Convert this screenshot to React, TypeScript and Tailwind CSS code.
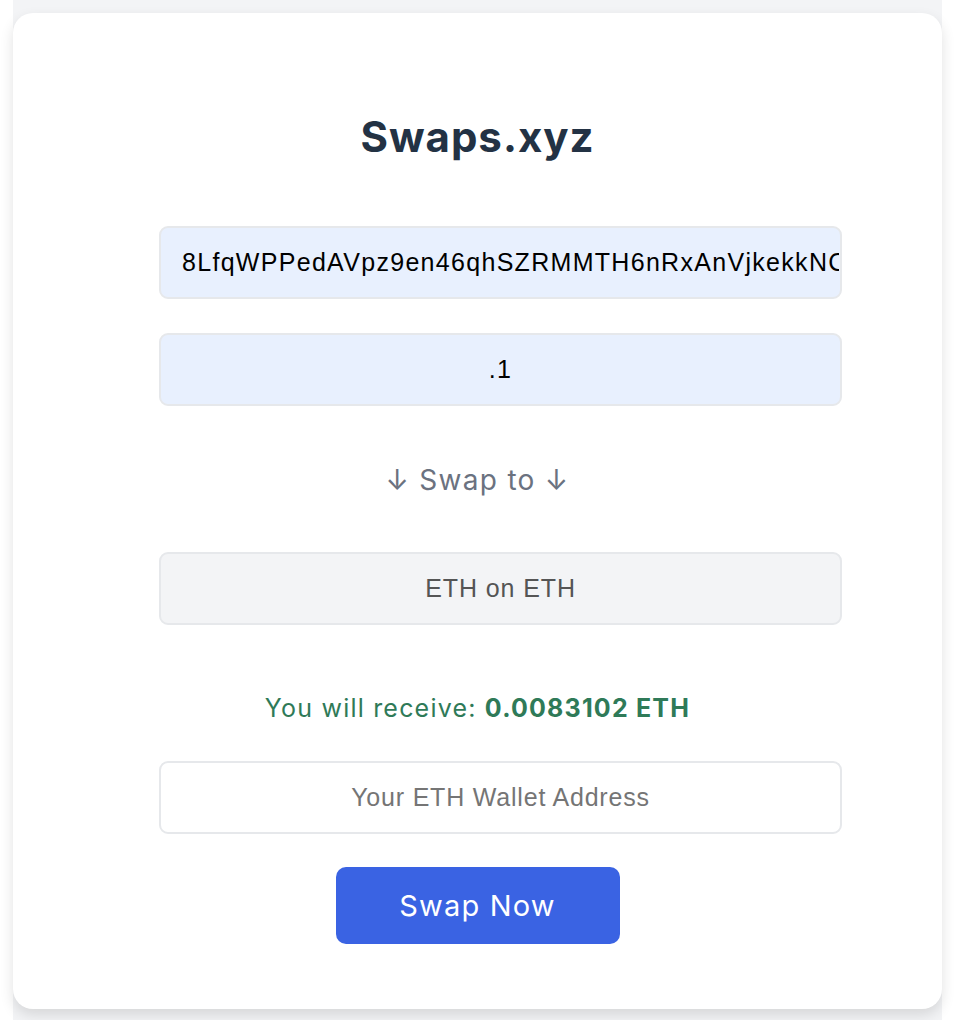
import { useState } from "react";

const App = () => {
  const [address, setAddress] = useState("");

  return (
    <div className="min-h-screen bg-white">
      <div className="ml-[13px] w-[929px] min-h-screen bg-[#f3f4f6] pt-[13px]">
        <div className="flex flex-col items-center rounded-[20px] bg-white pt-[112px] pb-[65px] shadow-[0_6px_14px_rgba(0,0,0,0.12)]">
          <h1 className="font-['Inter',sans-serif] text-[42px] leading-[50px] font-bold tracking-[1px] text-[#233244] -mt-[13px]">
            Swaps.xyz
          </h1>

          <div className="mt-[64px] flex w-[637px] flex-col">
            <input
              readOnly
              defaultValue="8LfqWPPedAVpz9en46qhSZRMMTH6nRxAnVjkekkNCDH4"
              className="h-[73px] w-[683px] max-w-none rounded-[9px] border-2 border-[#e6e8eb] bg-[#e8f0fe] pl-[21px] pr-[1px] text-center font-['Liberation_Sans',Arial,sans-serif] text-[25px] tracking-[1.3px] text-black outline-none"
            />
            <input
              readOnly
              defaultValue=".1"
              className="mt-[34px] h-[73px] w-[683px] max-w-none rounded-[9px] border-2 border-[#e6e8eb] bg-[#e8f0fe] px-[21px] text-center font-['Liberation_Sans',Arial,sans-serif] text-[25px] tracking-[1.3px] text-black outline-none"
            />

            <p className="mt-[57px] text-center font-['Inter',sans-serif] text-[28px] leading-[34px] tracking-[1.3px] text-[#6b7280]">
              ↓ Swap to ↓
            </p>

            <div className="mt-[55px] flex h-[73px] w-[683px] items-center justify-center rounded-[9px] border-2 border-[#e6e8eb] bg-[#f3f4f6] font-['Liberation_Sans',Arial,sans-serif] text-[25px] tracking-[0.9px] text-[#555555]">
              ETH on ETH
            </div>

            <p className="mt-[68px] text-center font-['Inter',sans-serif] text-[25px] leading-[30px] tracking-[1.2px] text-[#2f7a58]">
              You will receive: <span className="font-bold">0.0083102 ETH</span>
            </p>

            <input
              value={address}
              onChange={(e) => setAddress(e.target.value)}
              placeholder="Your ETH Wallet Address"
              className="mt-[38px] h-[73px] w-[683px] max-w-none rounded-[9px] border-2 border-[#e6e8eb] bg-white px-[21px] text-center font-['Liberation_Sans',Arial,sans-serif] text-[25px] tracking-[0.8px] text-black outline-none placeholder:text-[#757575]"
            />

            <button className="mt-[33px] h-[77px] w-[284px] self-center rounded-[10px] bg-[#3a63e3] font-['Inter',sans-serif] text-[29px] tracking-[1.2px] text-white">
              Swap Now
            </button>
          </div>
        </div>
      </div>
    </div>
  );
};

export default App;
